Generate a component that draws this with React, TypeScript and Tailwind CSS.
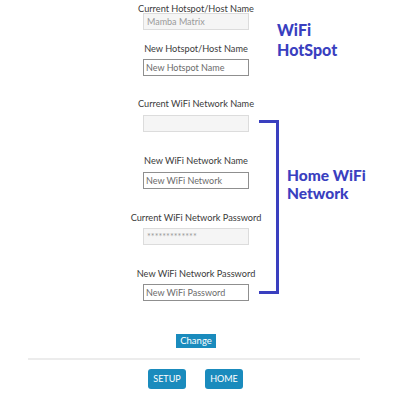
import React from "react";

type FieldProps = {
  label: string;
  placeholder?: string;
  value?: string;
  readOnly?: boolean;
  inputGap: string;
};

function Field({ label, placeholder, value, readOnly, inputGap }: FieldProps) {
  return (
    <div className="flex flex-col items-center">
      <div className="pt-[2px] text-[9.2px] leading-[11px] text-[#3a3a3a] whitespace-nowrap">{label}</div>
      <input
        readOnly
        value={value ?? ""}
        placeholder={placeholder}
        className={
          readOnly
            ? `${inputGap} w-[106px] h-[17px] px-[3px] border border-[#dcdcdc] bg-[#f5f5f5] text-[9px] text-[#9a9a9a] outline-none`
            : `${inputGap} w-[106px] h-[17px] px-[2px] border border-[#8f8f8f] bg-white text-[9px] text-[#555] placeholder:text-[#6b6b6b] outline-none`
        }
      />
    </div>
  );
}

export default function App() {
  return (
    <div className="relative w-[400px] h-[400px] overflow-hidden bg-white font-['Lato',sans-serif]">
      <div className="flex flex-col items-center w-[200px] ml-[96px]">
        <div className="mt-[1px]">
          <Field label="Current Hotspot/Host Name" value="Mamba Matrix" readOnly inputGap="mt-[-1px]" />
        </div>
        <div className="mt-[11px]">
          <Field label="New Hotspot/Host Name" placeholder="New Hotspot Name" inputGap="mt-[5px]" />
        </div>
        <div className="mt-[20px]">
          <Field label="Current WiFi Network Name" readOnly inputGap="mt-[6px]" />
        </div>
        <div className="mt-[21px]">
          <Field label="New WiFi Network Name" placeholder="New WiFi Network" inputGap="mt-[6px]" />
        </div>
        <div className="mt-[21px]">
          <Field label="Current WiFi Network Password" value="*************" readOnly inputGap="mt-[5px]" />
        </div>
        <div className="mt-[21px]">
          <Field label="New WiFi Network Password" placeholder="New WiFi Password" inputGap="mt-[5px]" />
        </div>
        <button className="mt-[33px] h-[14px] px-[4px] bg-[#1a8bbd] text-white text-[9.5px] leading-[14px]">
          Change
        </button>
      </div>

      <div className="mt-[10px] ml-[28px] w-[332px] h-[2px] bg-[#ececec]" />

      <div className="mt-[9px] flex gap-[19px] ml-[148px]">
        <button className="w-[38px] h-[20px] rounded-[3px] bg-[#1a8bbd] text-white text-[9px] leading-[20px]">SETUP</button>
        <button className="w-[38px] h-[20px] rounded-[3px] bg-[#1a8bbd] text-white text-[9px] leading-[20px]">HOME</button>
      </div>

      {/* annotation callouts */}
      <div className="absolute left-[277px] top-[20px] text-[16px] leading-[20px] font-black text-[#3a3fbf]">
        <div>WiFi</div>
        <div>HotSpot</div>
      </div>
      <div className="absolute left-[259px] top-[120px] w-[20px] h-[174px] border-t-[3px] border-b-[3px] border-r-[3px] border-[#3a3fbf]" />
      <div className="absolute left-[287px] top-[166px] text-[15.5px] leading-[18px] font-black text-[#3a3fbf]">
        <div>Home WiFi</div>
        <div>Network</div>
      </div>
    </div>
  );
}
